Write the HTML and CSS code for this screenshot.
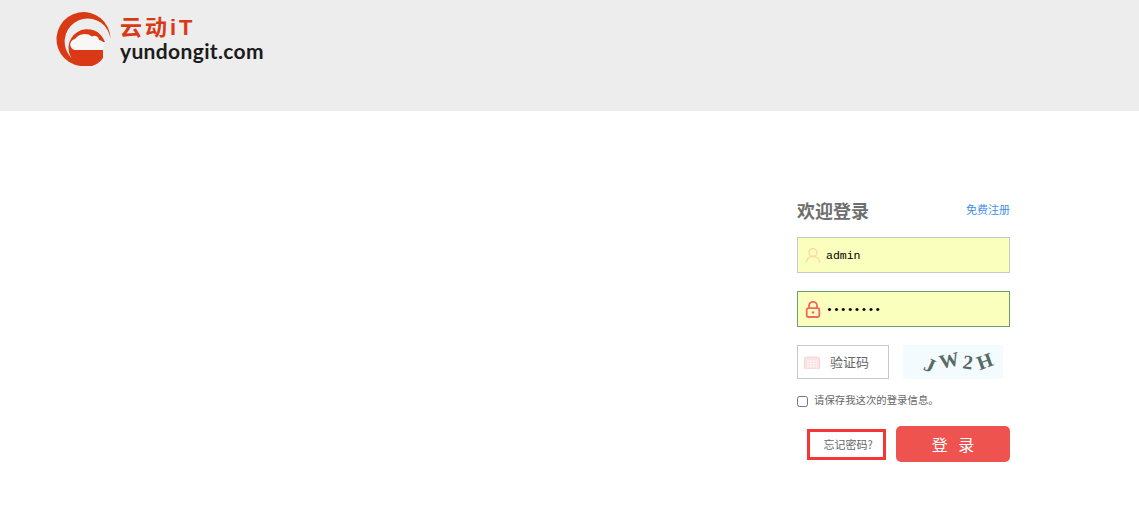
FILE: index.html
```html
<!DOCTYPE html>
<html lang="zh-CN">
<head>
    <meta charset="UTF-8">
    <title>云动iT</title>
    <link rel="stylesheet" href="styles.css">
</head>
<body>
    <header class="top">
        <div class="logo">
            <svg class="logo-mark" width="56" height="54" viewBox="0 0 56 54">
                <path d="M54.5 27A27 27 0 1 0 41 50.5A23 23 0 1 1 54.5 27Z" fill="#d93a15"/>
                <path d="M49 30A18.7 18.7 0 1 0 47 46V38H44V30Z" fill="#d93a15"/>
                <path d="M20.5 38A5.5 5.5 0 0 1 19 27A12 12 0 0 1 36 24.5A4.5 4.5 0 0 1 43 28A5.2 5.2 0 0 1 44.5 38Z" fill="#f7f7f7"/>
            </svg>
            <div class="logo-text">
                <div class="logo-cn">云动iT</div>
                <div class="logo-en">yundongit.com</div>
            </div>
        </div>
    </header>

    <main class="main">
        <form class="login">
            <div class="login-head">
                <h1>欢迎登录</h1>
                <a href="#">免费注册</a>
            </div>

            <div class="field filled">
                <svg class="field-icon" width="16" height="16" viewBox="0 0 16 16" fill="none" stroke="#fdd9a6" stroke-width="1.4">
                    <circle cx="8" cy="5.5" r="4"/>
                    <path d="M1.5 15.5C1.5 11.5 4 9.5 8 9.5S14.5 11.5 14.5 15.5"/>
                </svg>
                <input type="text" value="admin">
            </div>

            <div class="field filled active">
                <svg class="field-icon" width="16" height="17" viewBox="0 0 16 17" fill="none" stroke="#f2675f" stroke-width="1.8">
                    <path d="M4 7.5V4.5A4 3.7 0 0 1 12 4.5V7.5"/>
                    <rect x="1.7" y="7.2" width="12.6" height="8.8" rx="1.5"/>
                    <circle cx="8" cy="11.5" r="1.2" fill="#f2675f" stroke="none"/>
                </svg>
                <input type="password" value="12345678">
            </div>

            <div class="code-row">
                <div class="field code">
                    <svg class="field-icon" width="16" height="13" viewBox="0 0 16 13">
                        <rect x="0.5" y="1" width="15" height="12" rx="1.5" fill="#fde4e4" stroke="#fbd3d3"/>
                        <path d="M3 5H13M3 7.5H13M3 10H13" stroke="#fff" stroke-dasharray="2 1"/>
                    </svg>
                    <input type="text" placeholder="验证码">
                </div>
                <div class="captcha">
                    <span class="c1">J</span><span class="c2">W</span><span class="c3">2</span><span class="c4">H</span>
                </div>
            </div>

            <label class="remember">
                <input type="checkbox">
                <span>请保存我这次的登录信息。</span>
            </label>

            <div class="actions">
                <a class="forgot" href="#">忘记密码?</a>
                <button type="button" class="submit">登 录</button>
            </div>
        </form>
    </main>
</body>
</html>
```

FILE: styles.css
```css
html, body {
    margin: 0;
    background: #fff;
    font-family: "Noto Sans CJK SC", "Liberation Sans", sans-serif;
}
.top {
    height: 111px;
    background: #ededed;
    padding: 12px 0 0 56px;
    box-sizing: border-box;
}
.logo {
    display: flex;
    align-items: flex-start;
}
.logo-mark {
    flex: none;
}
.logo-text {
    margin-left: 8px;
}
.logo-cn {
    margin-top: 4px;
    height: 24px;
    line-height: 24px;
    font-family: "Liberation Sans", "Noto Sans CJK SC", sans-serif;
    font-size: 22px;
    font-weight: 700;
    letter-spacing: 3px;
    color: #d93a15;
}
.logo-en {
    height: 22px;
    line-height: 22px;
    font-family: "Lato", sans-serif;
    font-size: 21px;
    font-weight: 700;
    letter-spacing: 0.35px;
    color: #1c1c1c;
}
.main {
    display: flex;
    justify-content: flex-end;
    padding: 88px 129px 0 0;
}
.login {
    width: 213px;
}
.login-head {
    display: flex;
    justify-content: space-between;
    align-items: center;
    height: 22px;
    margin-bottom: 16px;
}
.login-head h1 {
    margin: 0;
    font-size: 18px;
    font-weight: 700;
    color: #6e6e6e;
}
.login-head a {
    padding-bottom: 2px;
    font-size: 11px;
    color: #3f8fe6;
    text-decoration: none;
}
.field {
    display: flex;
    align-items: center;
    height: 36px;
    margin-bottom: 18px;
    padding-left: 7px;
    box-sizing: border-box;
    border: 1px solid #c8c8c8;
}
.field.filled {
    background: #faffbd;
}
.field.active {
    border-color: #6a9f6e;
}
.field-icon {
    flex: none;
}
.field input {
    flex: 1;
    min-width: 0;
    margin-left: 5px;
    padding: 0;
    border: 0;
    outline: 0;
    background: transparent;
    font-family: "Liberation Mono", monospace;
    font-size: 11.5px;
    color: #000;
}
.code-row {
    display: flex;
    align-items: flex-start;
    gap: 14px;
}
.field.code {
    width: 92px;
    height: 34px;
    margin-bottom: 0;
    padding-left: 6px;
}
.field.code input {
    margin-left: 10px;
    padding-bottom: 2px;
    font-family: "Noto Sans CJK SC", sans-serif;
    font-size: 13px;
}
.field.code input::placeholder {
    color: #666;
    opacity: 1;
}
.captcha {
    display: flex;
    justify-content: center;
    gap: 4px;
    width: 100px;
    height: 34px;
    line-height: 34px;
    padding-left: 12px;
    box-sizing: border-box;
    background: #f3fbff;
    font-family: "Liberation Serif", serif;
    font-size: 20px;
    font-weight: 700;
    color: #566a64;
}
.captcha span {
    display: block;
}
.c1 { transform: translateY(3px) rotate(24deg); }
.c2 { transform: translateY(-2px) rotate(-12deg); }
.c3 { transform: translateY(0) rotate(8deg); }
.c4 { transform: translateY(-1px) rotate(-20deg); }
.remember {
    display: flex;
    align-items: center;
    height: 14px;
    margin: 15px 0 18px;
    font-size: 10.4px;
    color: #666;
}
.remember input {
    width: 11px;
    height: 11px;
    margin: 0 6px 0 0;
}
.remember span {
    margin-bottom: 3px;
}
.actions {
    display: flex;
    align-items: center;
    justify-content: flex-end;
    gap: 10px;
}
.forgot {
    width: 79px;
    height: 31px;
    line-height: 24px;
    text-align: center;
    padding-left: 3px;
    box-sizing: border-box;
    border: 3px solid #f63535;
    font-size: 11px;
    color: #666;
    text-decoration: none;
}
.submit {
    width: 114px;
    height: 36px;
    padding: 0;
    border: 0;
    border-radius: 5px;
    background: #ef5350;
    color: #fff;
    font-family: inherit;
    font-size: 16px;
    word-spacing: 7px;
}
```
